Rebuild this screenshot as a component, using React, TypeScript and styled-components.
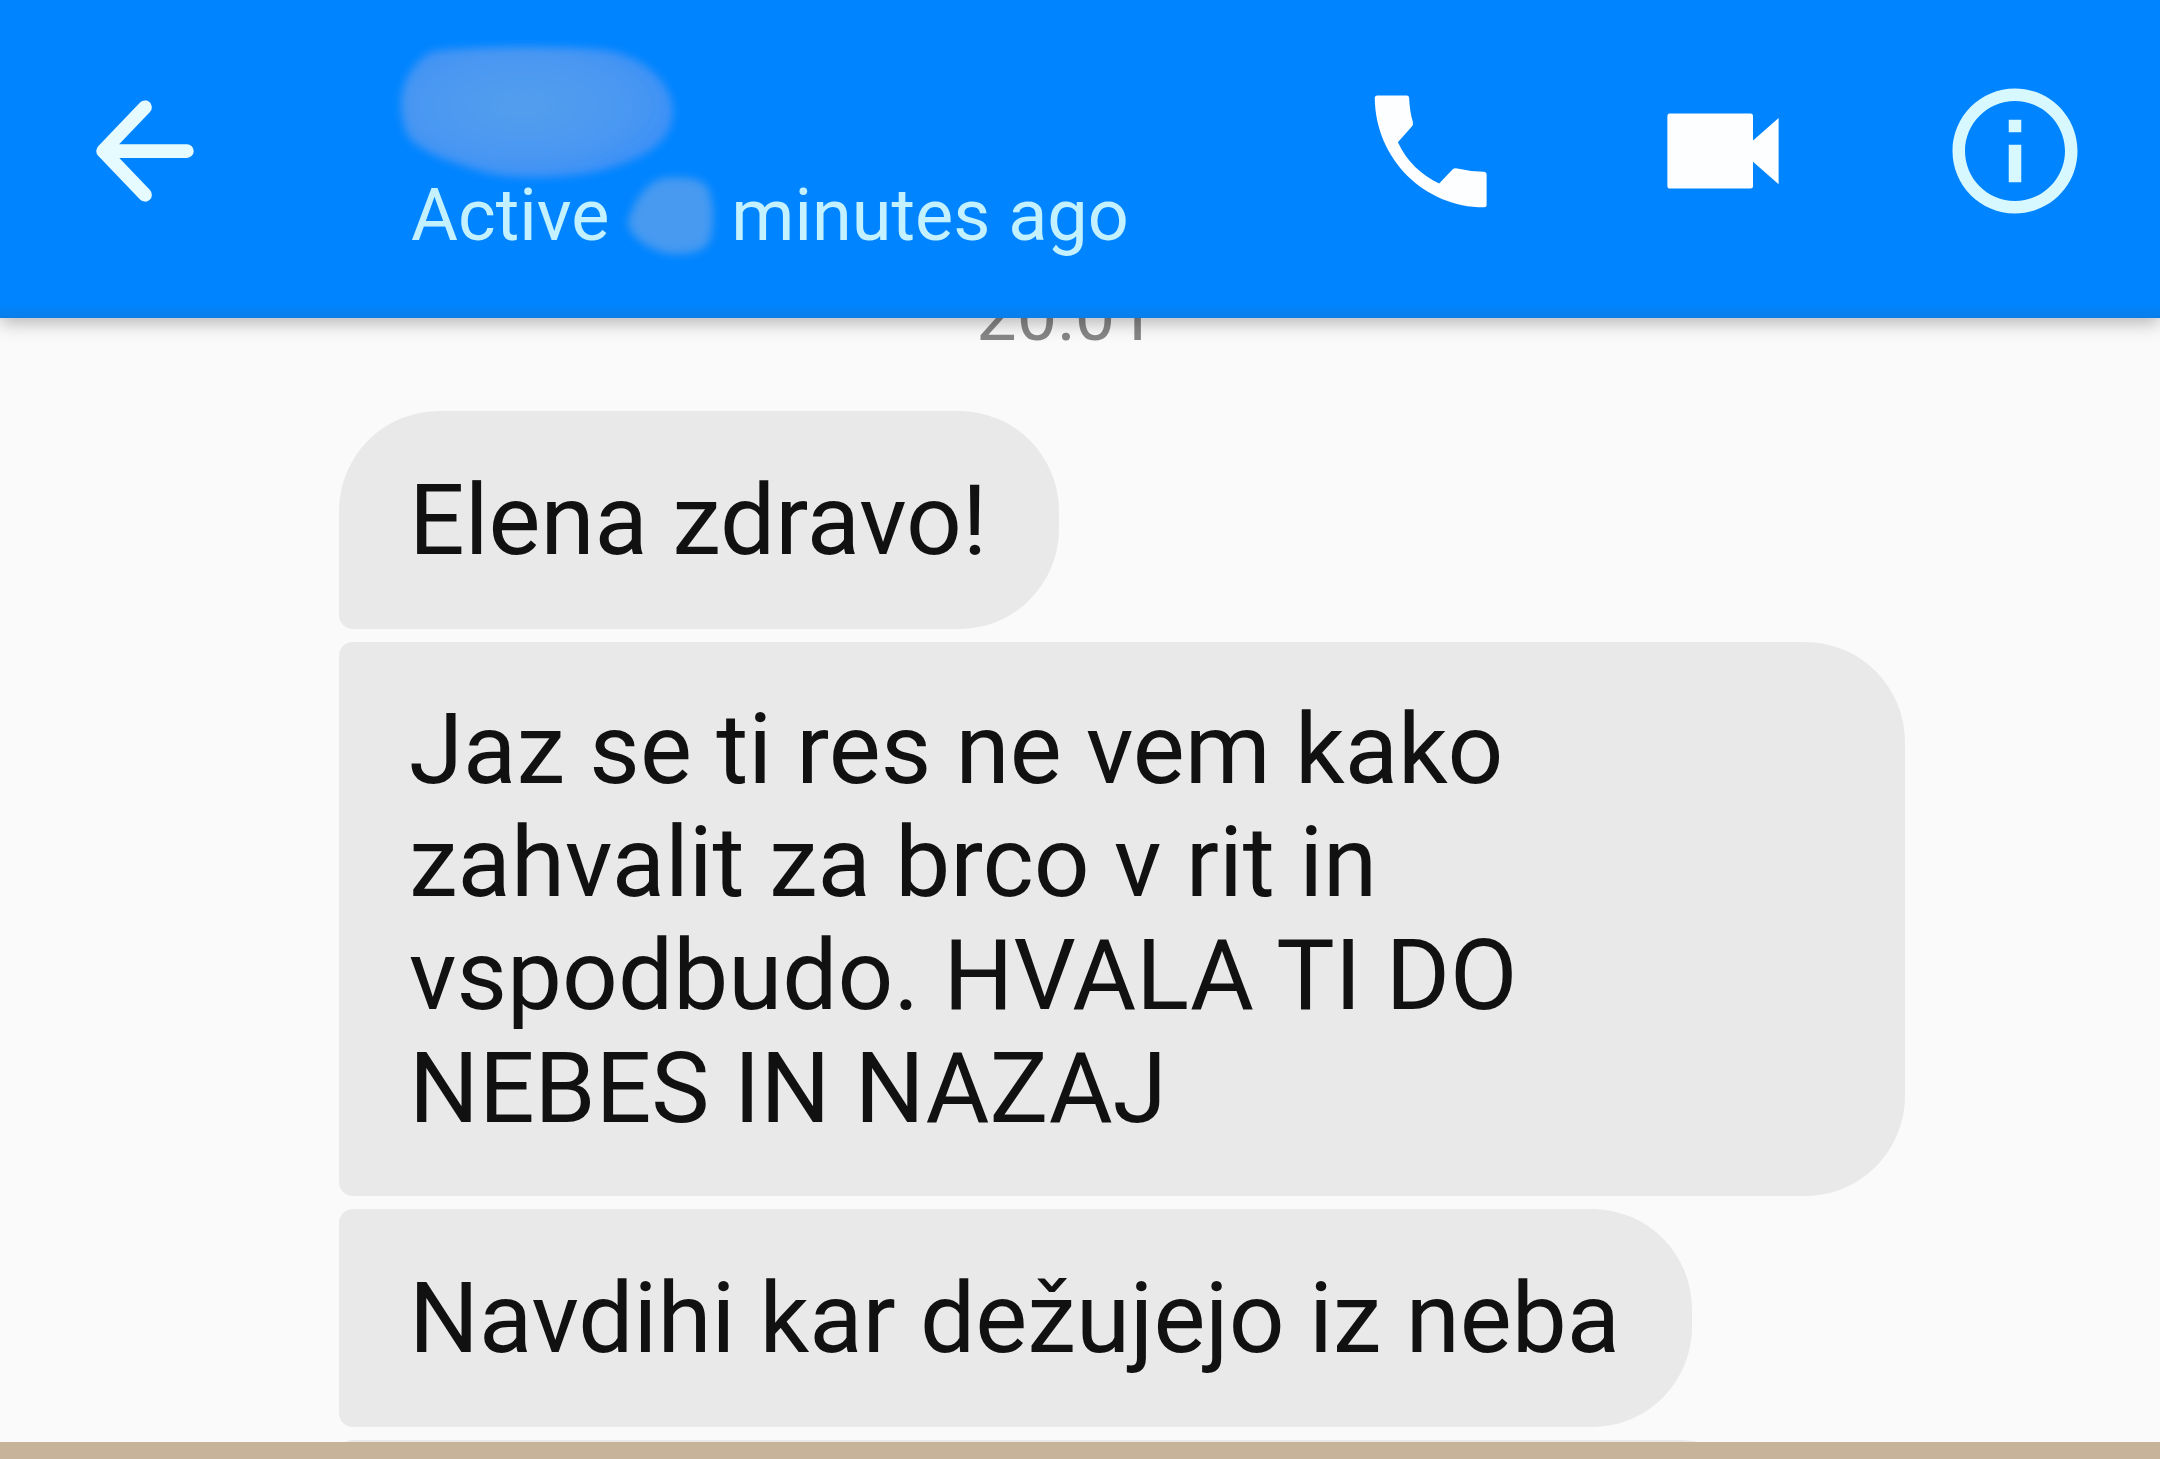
import React from "react";
import styled, { createGlobalStyle } from "styled-components";

const GlobalStyle = createGlobalStyle`
  *, *::before, *::after { box-sizing: border-box; }
  body {
    margin: 0;
    background: #fafafa;
    font-family: Roboto, "Noto Sans", sans-serif;
  }
`;

const Page = styled.div`
  display: flex;
  flex-direction: column;
  height: 100vh;
  overflow: hidden;
`;

const Header = styled.header`
  position: relative;
  z-index: 1;
  flex: none;
  display: flex;
  align-items: center;
  padding: 44px 70px 60px;
  background: linear-gradient(to bottom, #0084ff calc(100% - 14px), #0a7ee9);
  box-shadow: 0 4px 18px rgba(0, 0, 0, 0.3);
`;

const IconButton = styled.button<{ $tint?: string }>`
  flex: none;
  width: 150px;
  height: 150px;
  padding: 0;
  border: 0;
  background: none;
  color: ${(p) => p.$tint ?? "#fcfeff"};
  cursor: pointer;

  svg {
    display: block;
    width: 100%;
    height: 100%;
  }
`;

const Contact = styled.div`
  flex: 1;
  min-width: 0;
  margin-left: 180px;
`;

const HiddenName = styled.svg`
  display: block;
  width: 274px;
  height: 137px;
  margin-bottom: -7px;
  overflow: visible;
`;

const Status = styled.p`
  display: flex;
  align-items: center;
  gap: 17px;
  margin: 0;
  padding-left: 11px;
  font-size: 72px;
  line-height: 84px;
  color: #c4f1ff;
  white-space: nowrap;
`;

const HiddenCount = styled.svg`
  flex: none;
  width: 88px;
  height: 80px;
  overflow: visible;
`;

const Actions = styled.nav`
  flex: none;
  display: flex;
  gap: 142px;
`;

const Thread = styled.main`
  flex: 1;
  min-height: 0;
  overflow: hidden;
  padding-right: 28px;
`;

const Time = styled.time`
  display: block;
  margin: -44px 0 53px;
  text-align: center;
  font-size: 72px;
  line-height: 84px;
  color: #868686;
`;

const Messages = styled.ol`
  display: flex;
  flex-direction: column;
  align-items: flex-start;
  gap: 13px;
  margin: 0;
  padding: 0 0 0 339px;
  list-style: none;
`;

const Bubble = styled.li<{ $first?: boolean }>`
  display: flex;
  align-items: center;
  flex: none;
  min-height: 218px;
  max-width: 1566px;
  padding: 51px 72px 51px 70px;
  border-radius: ${(p) => (p.$first ? "100px" : "14px")} 100px 100px 14px;
  background: #e9e9e9;
  color: #111;
  font-size: 98px;
  line-height: 113px;
`;

const NextBubble = styled(Bubble)`
  width: 1440px;
`;

const Footer = styled.footer`
  flex: none;
  height: 17px;
  background: #c7b399;
`;

const messages = [
  "Elena zdravo!",
  "Jaz se ti res ne vem kako zahvalit za brco v rit in vspodbudo. HVALA TI DO NEBES IN NAZAJ",
  "Navdihi kar dežujejo iz neba",
];

export default function App() {
  return (
    <Page>
      <GlobalStyle />
      <Header>
        <IconButton type="button" aria-label="Back" $tint="#e6fbff">
          <svg
            viewBox="0 0 24 24"
            fill="none"
            stroke="currentColor"
            strokeWidth="2.2"
            strokeLinecap="round"
            strokeLinejoin="round"
          >
            <path d="M18.7 12H6M12 5 5.3 12l6.7 7" />
          </svg>
        </IconButton>
        <Contact>
          <HiddenName viewBox="0 0 274 137" aria-hidden="true">
            <defs>
              <radialGradient id="smudge" cx="0.45" cy="0.45" r="0.6">
                <stop offset="0" stopColor="#549eee" />
                <stop offset="0.6" stopColor="#4a98f1" />
                <stop offset="1" stopColor="#3c90f7" />
              </radialGradient>
              <filter id="soften" x="-10%" y="-10%" width="120%" height="120%">
                <feGaussianBlur stdDeviation="4" />
              </filter>
            </defs>
            <path
              fill="url(#smudge)"
              filter="url(#soften)"
              d="M1 58C2 40 12 16 34 7C70 2 160 1 205 6C245 12 273 40 273 68C272 96 250 115 195 128C165 134 110 137 80 127C50 118 20 108 8 92C3 82 1 70 1 58Z"
            />
          </HiddenName>
          <Status>
            <span>Active</span>
            <HiddenCount viewBox="0 0 88 80" aria-hidden="true">
              <path
                fill="#479af0"
                filter="url(#soften)"
                d="M2 46C6 30 18 6 38 2C56 1 76 0 83 14C88 30 88 50 84 64C78 76 64 78 48 78C28 77 3 62 2 46Z"
              />
            </HiddenCount>
            <span>minutes ago</span>
          </Status>
        </Contact>
        <Actions aria-label="Conversation actions">
          <IconButton type="button" aria-label="Call">
            <svg viewBox="0 0 24 24" fill="currentColor">
              <path d="M3.4 3.1H8.1Q8.5 3.1 8.5 3.5Q8.6 5.8 9.1 7.3Q9.2 7.8 8.9 8.1L6.7 10.6C8.1 13.6 10.4 15.8 13.3 17.2L15.4 15Q15.7 14.7 16.2 14.8Q18.3 15.3 20.4 15.3Q20.9 15.3 20.9 15.8V20.6Q20.9 21 20.5 21C11 21 3.1 13.3 3 3.5Q3 3.1 3.4 3.1Z" />
            </svg>
          </IconButton>
          <IconButton type="button" aria-label="Video call">
            <svg viewBox="0 0 24 24" fill="currentColor">
              <path d="M3.4 6H16.4Q16.8 6 16.8 6.4V10.3L20.9 6.7V17.3L16.8 13.7V17.6Q16.8 18 16.4 18H3.4Q3.1 18 3.1 17.6V6.4Q3.1 6 3.4 6Z" />
            </svg>
          </IconButton>
          <IconButton type="button" aria-label="Conversation information" $tint="#d8f8ff">
            <svg viewBox="0 0 24 24" fill="currentColor">
              <path d="M11 7h2v2h-2zm0 4h2v6h-2zm1-9C6.48 2 2 6.48 2 12s4.48 10 10 10 10-4.48 10-10S17.52 2 12 2zm0 18c-4.41 0-8-3.59-8-8s3.59-8 8-8 8 3.59 8 8-3.59 8-8 8z" />
            </svg>
          </IconButton>
        </Actions>
      </Header>
      <Thread>
        <Time>20:01</Time>
        <Messages>
          {messages.map((text, i) => (
            <Bubble key={text} $first={i === 0}>
              {text}
            </Bubble>
          ))}
          <NextBubble aria-hidden="true" />
        </Messages>
      </Thread>
      <Footer />
    </Page>
  );
}
